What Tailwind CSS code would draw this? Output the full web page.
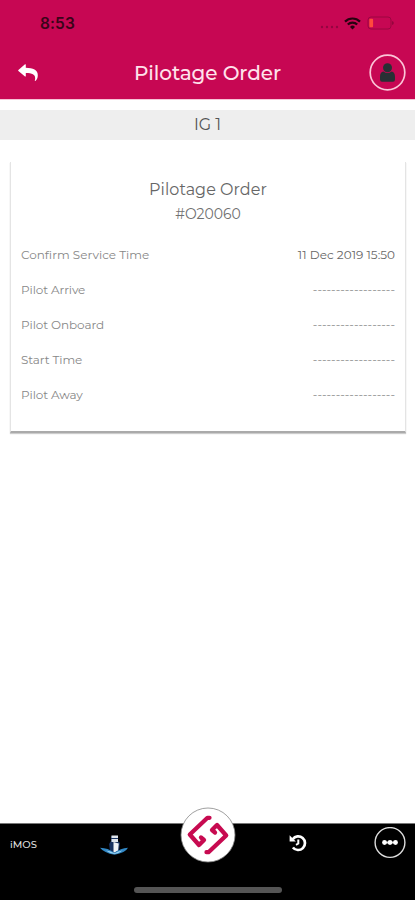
<!DOCTYPE html>
<html lang="en">
<head>
    <meta charset="UTF-8">
    <meta name="viewport" content="width=device-width, initial-scale=1.0">
    <title>Pilotage Order</title>
    <script src="https://cdn.jsdelivr.net/npm/@tailwindcss/browser@4"></script>
</head>
<body class="bg-white font-[Montserrat,Inter,sans-serif]">
    <div class="h-[900px] w-full flex flex-col overflow-hidden">
        <header class="h-[100px] shrink-0 bg-[#c70753] border-b border-[#f7c3d6]">
            <!-- Status bar -->
            <div class="h-[46px] flex items-center justify-between pl-10 pr-[21px]">
                <span class="mt-[2px] font-[Inter,sans-serif] text-[15.5px] font-semibold text-[#3a0419] tracking-[0.1px]">8:53</span>
                <div class="flex items-center">
                    <svg class="mt-2 mr-[5px]" width="19" height="4" viewBox="0 0 19 4" fill="#930641">
                        <circle cx="2" cy="2" r="1.2"/><circle cx="7" cy="2" r="1.2"/><circle cx="12" cy="2" r="1.2"/><circle cx="17" cy="2" r="1.2"/>
                    </svg>
                    <svg class="mr-[6px]" width="17" height="13" viewBox="0 0 17 13" fill="none" stroke="#26030f" stroke-width="2.2">
                        <path d="M1 4.6a10.6 10.6 0 0 1 15 0M3.8 7.6a6.6 6.6 0 0 1 9.4 0"/>
                        <path d="M8.5 12.4 6 9.9a3.5 3.5 0 0 1 5 0z" fill="#26030f" stroke="none"/>
                    </svg>
                    <svg width="27" height="14" viewBox="0 0 27 14">
                        <rect x="1" y="1" width="23" height="12" rx="3" fill="none" stroke="#9c0641"/>
                        <rect x="2.3" y="2.7" width="3.8" height="8.6" rx="1" fill="#ff4a3d"/>
                        <path d="M25.2 5v4q1.5-.6 1.5-2t-1.5-2z" fill="#8a0539"/>
                    </svg>
                </div>
            </div>
            <!-- Title bar -->
            <div class="h-[53px] flex items-center justify-between pl-[18px] pr-[9px]">
                <svg class="w-[37px] h-[18px]" viewBox="0 0 37 18" fill="#fff">
                    <path d="M.4 6 7 .3q.8-.5.8.5v3C15 4 19.800 5.700 19.800 11.300c0 2.300-.8 4.200-2.200 5.500q-1 .6-.7-.6c1.200-5-1.600-7-9.100-7.100v2.800q0 1-.8.5L.4 7q-.5-.5 0-1z"/>
                </svg>
                <h1 class="text-[20px] leading-6 font-medium tracking-[-0.1px] text-[#ffe2eb] mr-[9px]">Pilotage Order</h1>
                <svg width="37" height="37" viewBox="0 0 37 37">
                    <circle cx="18.500" cy="18.500" r="17.300" fill="none" stroke="#fbc5d7" stroke-width="1.700"/>
                    <circle cx="18.500" cy="13.800" r="4.500" fill="#293034"/>
                    <path d="M14.500 17.500q4 3 8 0c2.500.3 3.500 2.400 3.500 5.500v2.500q0 2.200-2 2.200H13q-2 0-2-2.200V23c0-3.100 1-5.200 3.500-5.500z" fill="#293034"/>
                </svg>
            </div>
        </header>

        <main class="flex-1">
            <div class="mt-[10px] h-[30px] bg-[#eee] flex items-center justify-center text-[16px] text-[#555]">IG 1</div>

            <section class="mt-[22px] ml-[10px] mr-[9px] h-[271px] px-[10px] border-x border-[#e4e4e4] border-b-2 border-b-[#aaa] shadow-[0_1px_1px_rgba(0,0,0,0.2)] [clip-path:inset(0_-2px_-3px_-2px)]">
                <h2 class="pt-4 text-center text-[16px] leading-6 tracking-[0.05px] text-[#666]">Pilotage Order</h2>
                <p class="text-center text-[14px] leading-6 -mt-px pt-px text-[#707070]">#O20060</p>
                <dl class="mt-[11px] text-[12px] text-[#888]">
                    <div class="h-[35px] flex items-center justify-between">
                        <dt>Confirm Service Time</dt>
                        <dd class="text-[#666] tracking-[0.02px]">11 Dec 2019 15:50</dd>
                    </div>
                    <div class="h-[35px] flex items-center justify-between">
                        <dt class="tracking-[-0.1px]">Pilot Arrive</dt>
                        <dd class="tracking-[-0.02px]">------------------</dd>
                    </div>
                    <div class="h-[35px] flex items-center justify-between">
                        <dt class="tracking-[-0.1px]">Pilot Onboard</dt>
                        <dd class="tracking-[-0.02px]">------------------</dd>
                    </div>
                    <div class="h-[35px] flex items-center justify-between">
                        <dt class="tracking-[-0.1px]">Start Time</dt>
                        <dd class="tracking-[-0.02px]">------------------</dd>
                    </div>
                    <div class="h-[35px] flex items-center justify-between">
                        <dt class="tracking-[-0.1px]">Pilot Away</dt>
                        <dd class="tracking-[-0.02px]">------------------</dd>
                    </div>
                </dl>
            </section>
        </main>

        <!-- Bottom navigation -->
        <footer class="h-[77px] shrink-0 bg-black border-t border-[#777] flex flex-col items-center">
            <nav class="w-full h-[38px] pl-[10px] pr-[9px] flex items-center">
                <span class="w-[90px] mt-[2px] text-[10px] font-medium text-[#ddd]">iMOS</span>
                <svg class="mt-[3px]" width="28" height="20" viewBox="0 0 28 20">
                    <path d="M11 1h7v5l2 2-1 8-4 3-5-3-1-7 2-3z" fill="#17315f"/>
                    <path d="M11.500 .500h6.500v2.500h-6.500zM11.500 4h6.500v3h-6.500z" fill="#dfe5ec"/>
                    <path d="M13.500 7 18.800 8.500l-.7 7-4.600 2.500z" fill="#f0f3f6"/>
                    <path d="M0 12.800q8 .2 14.500 5 6-4.500 13.500-5-2.500 5-13.500 7Q4 18 0 12.800z" fill="#3187c4"/>
                    <path d="M6 15.500q5 .5 8.500 2.700 3.500-2 8-2.700-3 2.700-8 3.500-5-.6-8.500-3.500z" fill="#9bd3f2"/>
                </svg>
                <svg class="-mt-[17px] ml-[52px]" width="56" height="56" viewBox="0 0 56 56">
                    <circle cx="28" cy="28" r="27" fill="#fff" stroke="#888" stroke-width=".8"/>
                    <g fill="none" stroke="#c70a50" stroke-width="4.300" stroke-linejoin="round" stroke-linecap="round">
                        <path d="M29.500 10.800h-2L9.800 27.500l9.200 10.500 5-5-3-2.500"/>
                        <path d="M26.500 45.200h2L46.200 28.500 37 18l-5 5 3 2.500"/>
                    </g>
                </svg>
                <svg class="ml-[53px] -mt-[1px]" width="18" height="18" viewBox="0 0 18 18" fill="none" stroke="#fff">
                    <path d="M3.700 5.200a6.800 6.800 0 1 1 .2 8.300" stroke-width="2.700"/>
                    <path d="M.6 1.300v6.200h6.200z" fill="#fff" stroke="none"/>
                    <path d="M9.300 5.500v4l-2.300 1.300" stroke-width="2"/>
                </svg>
                <svg class="ml-auto" width="32" height="32" viewBox="0 0 32 32" fill="#fff">
                    <circle cx="16" cy="15.500" r="14.900" fill="none" stroke="#ddd" stroke-width="1.400"/>
                    <path d="M10 15.500h12" stroke="#ccc" stroke-width="2"/>
                    <circle cx="10.500" cy="15.500" r="2.400"/><circle cx="16" cy="15.500" r="2.400"/><circle cx="21.500" cy="15.500" r="2.400"/>
                </svg>
            </nav>
            <div class="mt-[25px] w-[148px] h-[6px] rounded-full bg-[#555]"></div>
        </footer>
    </div>
</body>
</html>
